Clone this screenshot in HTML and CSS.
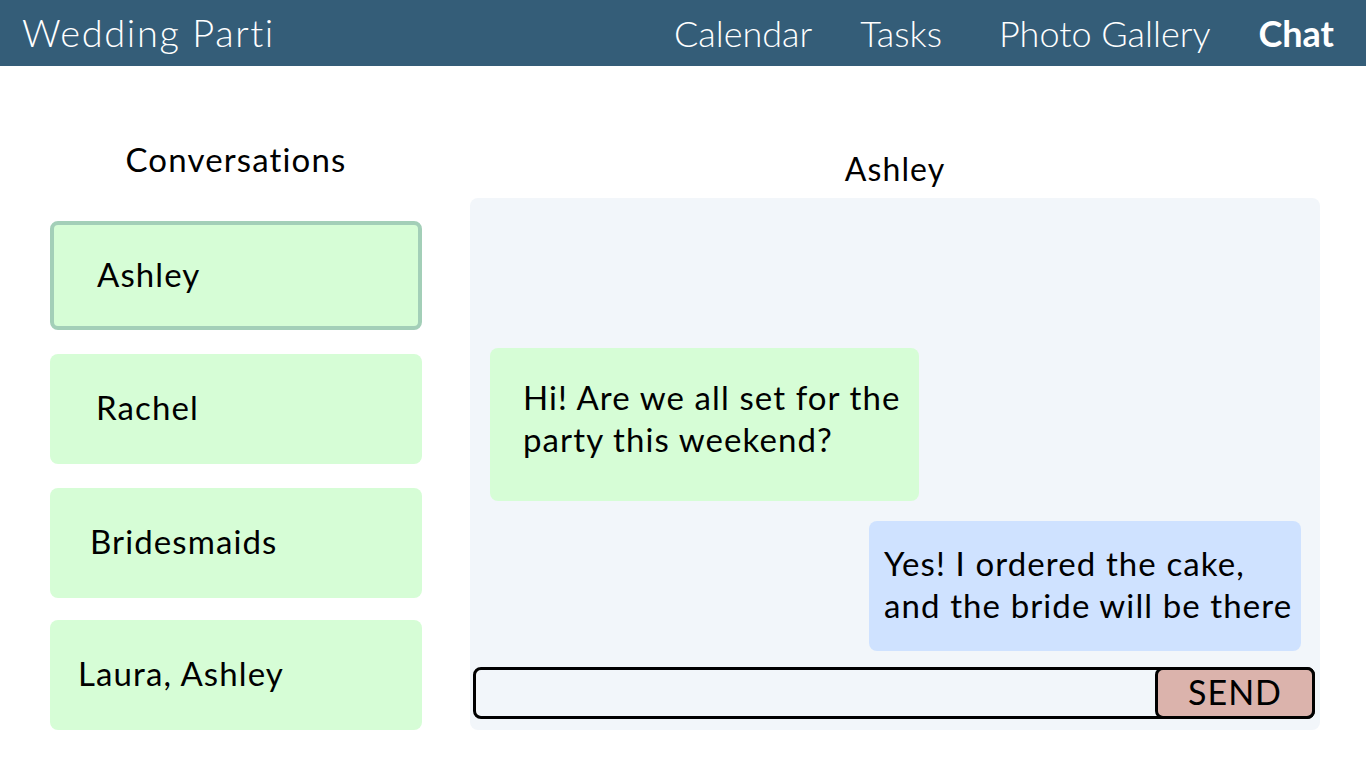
FILE: index.html
```html
<!DOCTYPE html>
<html lang="en">
<head>
<meta charset="utf-8">
<title>Wedding Parti - Chat</title>
<link rel="stylesheet" href="styles.css">
</head>
<body>
<header class="topbar">
  <div class="brand">Wedding Parti</div>
  <nav class="nav">
    <a class="nav-link" href="#">Calendar</a>
    <a class="nav-link nav-link--tasks" href="#">Tasks</a>
    <a class="nav-link" href="#">Photo Gallery</a>
    <a class="nav-link nav-link--active" href="#">Chat</a>
  </nav>
</header>
<main class="main">
  <section class="sidebar">
    <h2 class="sidebar-title">Conversations</h2>
    <ul class="conv-list">
      <li class="conv conv--active conv--p1">Ashley</li>
      <li class="conv conv--p2">Rachel</li>
      <li class="conv conv--p3">Bridesmaids</li>
      <li class="conv conv--p4">Laura, Ashley</li>
    </ul>
  </section>
  <section class="chat">
    <h2 class="chat-title">Ashley</h2>
    <div class="chat-panel">
      <div class="msg msg--in">Hi! Are we all set for the<br>party this weekend?</div>
      <div class="msg msg--out">Yes! I ordered the cake,<br>and the bride will be there</div>
      <form class="composer">
        <input class="composer-input" type="text" aria-label="Message">
        <button class="composer-send" type="button">SEND</button>
      </form>
    </div>
  </section>
</main>
</body>
</html>
```
FILE: styles.css
```css
* { box-sizing: border-box; }
html, body { margin: 0; padding: 0; }
body {
  font-family: Lato, "Noto Sans", sans-serif;
  color: #000;
  background: #fff;
  width: 1366px;
  height: 768px;
  overflow: hidden;
}
.topbar {
  height: 66px;
  background: #345d78;
  display: flex;
  align-items: center;
  justify-content: space-between;
  padding: 0 32px 0 22px;
  color: #fff;
}
.brand {
  font-size: 38px;
  font-weight: 300;
  letter-spacing: 1.6px;
  line-height: 1;
  padding-bottom: 2px;
}
.nav {
  display: flex;
  align-items: center;
  gap: 48px;
}
.nav-link {
  color: #fff;
  text-decoration: none;
  font-size: 36px;
  font-weight: 300;
  line-height: 1;
}
.nav-link--tasks { margin-right: 9px; }
.nav-link--active { font-weight: 700; }

.main {
  display: flex;
  padding: 0 46px 0 50px;
  gap: 48px;
}
.sidebar {
  width: 372px;
  flex: none;
}
.sidebar-title {
  margin: 0;
  padding-top: 74px;
  height: 155px;
  font-size: 33px;
  font-weight: 400;
  letter-spacing: 1.15px;
  text-align: center;
  line-height: 1.2;
}
.conv-list {
  list-style: none;
  margin: 0;
  padding: 0;
  display: flex;
  flex-direction: column;
  gap: 24px;
}
.conv {
  height: 110px;
  background: #d6fdd6;
  border-radius: 8px;
  display: flex;
  align-items: center;
  font-size: 33px;
  letter-spacing: 1.1px;
  padding-bottom: 4px;
}
.conv--active {
  border: 4px solid #a3cfb8;
  height: 109px;
}
.conv--p1 { padding-left: 43px; }
.conv--p2 { padding-left: 46px; }
.conv--p3 { padding-left: 40px; }
.conv--p4 { padding-left: 28px; margin-top: -2px; }

.chat {
  flex: 1;
  display: flex;
  flex-direction: column;
}
.chat-title {
  margin: 0;
  padding-top: 84px;
  height: 132px;
  font-size: 32px;
  font-weight: 400;
  letter-spacing: 1.1px;
  text-align: center;
  line-height: 1.2;
}
.chat-panel {
  height: 532px;
  background: #f2f6fa;
  border-radius: 8px;
  display: flex;
  flex-direction: column;
  justify-content: flex-end;
  padding: 0 5px 11px 3px;
}
.msg {
  font-size: 33px;
  line-height: 42px;
  letter-spacing: 1.1px;
  border-radius: 8px;
}
.msg--in {
  align-self: flex-start;
  margin-left: 17px;
  width: 429px;
  background: #d6fdd6;
  padding: 28px 6px 41px 33px;
}
.msg--out {
  align-self: flex-end;
  margin-right: 14px;
  margin-top: 20px;
  width: 432px;
  background: #cfe2ff;
  padding: 21px 4px 25px 15px;
}
.composer {
  margin: 16px 0 0;
  height: 52px;
  display: flex;
}
.composer-input {
  flex: 1;
  min-width: 0;
  height: 52px;
  border: 3px solid #000;
  border-radius: 8px;
  background: #f2f6fa;
  font: inherit;
  padding: 0 12px;
  margin-right: -160px;
}
.composer-send {
  width: 160px;
  height: 52px;
  border: 3px solid #000;
  border-radius: 8px;
  background: #dbb3ac;
  font-family: inherit;
  font-size: 34px;
  letter-spacing: 1px;
  font-weight: 400;
  color: #000;
  padding: 0 0 2px;
  line-height: 1;
  position: relative;
}
```
